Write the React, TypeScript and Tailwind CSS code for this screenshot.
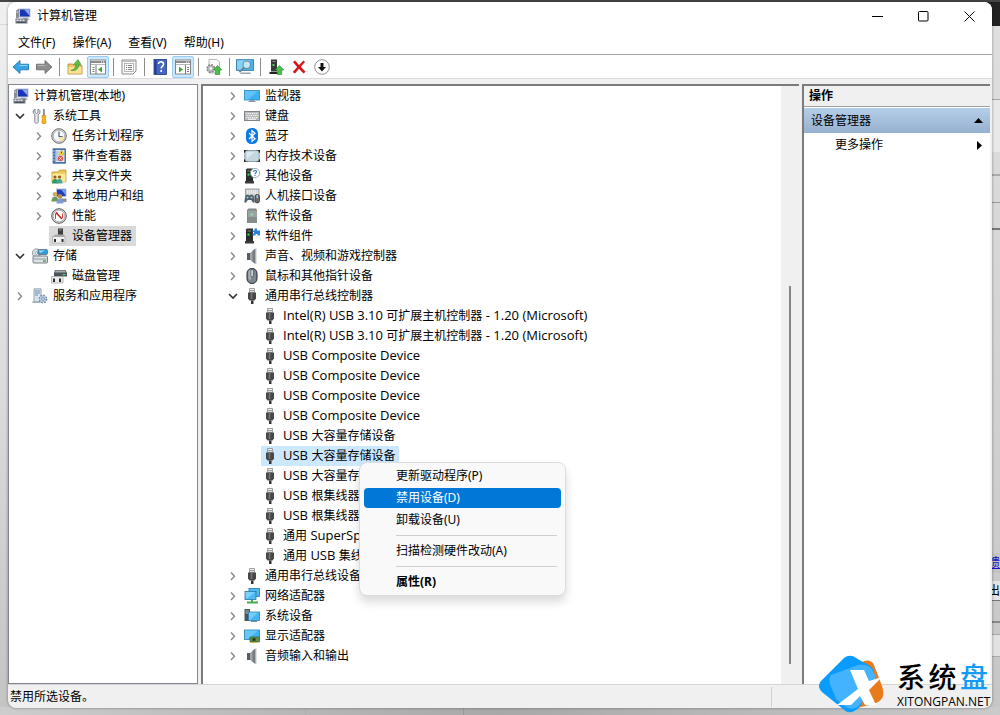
import { Fragment, type ReactNode } from "react";
import { clsx } from "clsx";

/* ---------- icons ---------- */

function Svg({ children, size = 16 }: { children: ReactNode; size?: number }) {
  return (
    <svg width={size} height={size} viewBox="0 0 16 16" className="shrink-0" aria-hidden="true">
      {children}
    </svg>
  );
}

const ComputerIcon = () => (
  <Svg>
    <path d="M1 2.500l3-2v9l-3 1z" fill="#8a8f96" />
    <path d="M1.500 3.500h1.500v1H1.500z" fill="#e8ecef" />
    <rect x="4" y="0.500" width="11.500" height="9" fill="#b9c3cf" />
    <rect x="5" y="1.500" width="9.500" height="7" fill="#1b35b5" />
    <path d="M9 1.500h5.500v6z" fill="#8fabf0" />
    <path d="M8 9.500h5l2 2.500H8z" fill="#b4bcc4" />
    <path d="M0.500 10.500h12v5h-12z" fill="#737b83" />
    <path d="M1.500 11.500h2v1.500h-2zM4.500 11.500h2v1.500h-2zM7.500 11.500h2v1.500h-2z" fill="#e3e8ec" />
    <path d="M2 14h9v1H2z" fill="#4a5056" />
  </Svg>
);

const ToolsIcon = () => (
  <Svg>
    <path d="M3 1v3.500L4.500 5.500 6 4.500V1c1.600.8 2.300 2.200 1.800 3.800-.2.800-.9 1.400-1.600 1.800v7.200c0 2-3.400 2-3.400 0V6.600C1.800 6 1.200 5.200 1.200 4 1.200 2.600 2 1.500 3 1z" fill="#e9edf0" stroke="#6f7880" strokeWidth="0.900" />
    <path d="M11 1h1.800v6.500H11z" fill="#848c93" />
    <path d="M10 7.500h3.800v2l-.6.600.8 4.200c0 2-4.200 2-4.200 0l.8-4.200-.6-.6z" fill="#f8b41c" stroke="#bd7c05" strokeWidth="0.600" />
  </Svg>
);

const ClockIcon = () => (
  <Svg>
    <circle cx="8" cy="8" r="7.300" fill="#d6d6d6" stroke="#6d6d6d" />
    <circle cx="8" cy="8" r="5.700" fill="#f6fafd" stroke="#a5a5a5" strokeWidth="0.700" />
    <path d="M8 13.500A5.500 5.500 0 0 0 13.300 8.500L8 8z" fill="#f4e6a6" />
    <path d="M8 3.500V8.500h3.500" stroke="#4d617a" fill="none" strokeWidth="1.200" />
  </Svg>
);

const EventIcon = () => (
  <Svg>
    <rect x="2" y="0.800" width="12.500" height="14.400" fill="#4a78b8" stroke="#2f568c" strokeWidth="0.700" />
    <rect x="4.500" y="2" width="9" height="12" fill="#dbe8f6" />
    <path d="M5 4h3M5 6h2M5 8h2M5 10h2M5 12h2" stroke="#7c9cc4" strokeWidth="0.800" />
    <path d="M10.500 2l3 5h-6z" fill="#ffdf43" stroke="#b58f00" strokeWidth="0.500" />
    <path d="M10.500 3.800v1.700" stroke="#5d4a00" />
    <circle cx="9.500" cy="10.500" r="2.700" fill="#e0574b" />
    <path d="M8.500 9.500l2 2m0-2l-2 2" stroke="#fff" />
    <path d="M1 3h2.500M1 6h2.500M1 9h2.500M1 12h2.500" stroke="#c9d6e6" />
  </Svg>
);

const SharedFolderIcon = () => (
  <Svg>
    <path d="M1 4h6l1.500-2H15v12H1z" fill="#ecc757" stroke="#b8902c" strokeWidth="0.700" />
    <path d="M1.500 5.500h13v8.500h-13z" fill="#fae898" />
    <circle cx="4" cy="9" r="1.600" fill="#8c5c2e" />
    <path d="M1 15.500c0-3.500 1.500-4.500 3-4.500s3 1 3 4.500z" fill="#2e9a55" />
    <circle cx="8.500" cy="9" r="1.600" fill="#8c5c2e" />
    <path d="M5.500 15.500c0-3.500 1.500-4.500 3-4.500s3 1 3 4.500z" fill="#4ba1a0" />
  </Svg>
);

const UsersIcon = () => (
  <Svg>
    <rect x="5" y="0.500" width="10.500" height="8.500" fill="#b9c3cf" />
    <rect x="6" y="1.500" width="8.500" height="6.500" fill="#1c3fbe" />
    <path d="M10 1.500h4.500v5.500z" fill="#7ea0ee" />
    <path d="M9 10.500h6.500v3.500H9z" fill="#8a9097" />
    <circle cx="4" cy="6.300" r="2.400" fill="#d2a865" />
    <path d="M0.500 13.500c0-3.500 1.500-4.700 3.500-4.700s3.500 1.200 3.500 4.700z" fill="#6c9a58" />
    <circle cx="9" cy="8.300" r="2.400" fill="#b98a4e" />
    <path d="M5.500 15.500c0-3.500 1.500-5 3.500-5s3.500 1.500 3.500 5z" fill="#7f9cd2" />
  </Svg>
);

const PerformanceIcon = () => (
  <Svg>
    <circle cx="8" cy="8" r="7.300" fill="#d9d9d9" stroke="#5d5d5d" />
    <circle cx="8" cy="8" r="5.800" fill="#fff" stroke="#8b8b8b" strokeWidth="0.600" />
    <path d="M4.500 11V6l2-1.500M11.500 10V5.500" stroke="#d4453d" strokeWidth="1.100" fill="none" />
    <path d="M5 4.500l6 6.500" stroke="#b9201a" strokeWidth="1.500" />
  </Svg>
);

const DeviceManagerIcon = () => (
  <Svg>
    <path d="M7 0.500h5v7H7z" fill="#3d3d3d" />
    <path d="M8 1.500h3v1H8z" fill="#8c8c8c" />
    <path d="M1.500 8.500h12.500v6.500H1.500z" fill="#f1f1f1" stroke="#a8a8a8" strokeWidth="0.700" />
    <path d="M4 6.500h9l1 2.500H2z" fill="#a9a9a9" />
    <path d="M3 11h2v3H3zM10.500 11h2v3h-2z" fill="#2c2c2c" />
  </Svg>
);

const StorageIcon = () => (
  <Svg>
    <circle cx="4.500" cy="5" r="4.200" fill="#d8dde2" stroke="#828a92" strokeWidth="0.800" />
    <circle cx="4.500" cy="5" r="1.200" fill="#fff" stroke="#828a92" strokeWidth="0.600" />
    <rect x="6" y="1.500" width="9.500" height="5" rx="1" fill="#2f9ddb" stroke="#5b6770" strokeWidth="0.700" />
    <path d="M7 2.500h6L8 5z" fill="#a5dcf8" />
    <rect x="1" y="8" width="14.500" height="7" rx="1" fill="#dde2e6" stroke="#6c757d" strokeWidth="0.900" />
    <path d="M2 11h12.500" stroke="#929ba3" />
    <rect x="11" y="12.300" width="3" height="1.400" fill="#35a843" />
  </Svg>
);

const DiskIcon = () => (
  <Svg>
    <path d="M4 2h10.500L16 5v3.500H3V5z" fill="#4b5257" />
    <path d="M4.500 2.500h9.500l1 2H4z" fill="#a4acb1" />
    <rect x="11.500" y="6" width="3" height="1.200" fill="#54d069" />
    <path d="M0.500 8.500h11.500v6.500H0.500z" fill="#ececec" stroke="#9d9d9d" strokeWidth="0.700" />
    <path d="M2 10.500h2V14H2zM8 10.500h2V14H8z" fill="#2c2c2c" />
  </Svg>
);

const ServicesIcon = () => (
  <Svg>
    <path d="M2 0.800h7v13H2z" fill="#dbe5ee" stroke="#7f95aa" strokeWidth="0.800" />
    <path d="M3 3h5M3 5h5M3 7h3" stroke="#6c8db0" />
    <path d="M0.500 13h8v2h-8z" fill="#a5b4c2" />
    <circle cx="11" cy="11" r="3.600" fill="#c3d4e5" stroke="#6f8eaf" strokeWidth="1.600" strokeDasharray="1.700 1.100" />
    <circle cx="11" cy="11" r="3" fill="#b4cae0" />
    <circle cx="11" cy="11" r="1.300" fill="#fff" stroke="#50749b" strokeWidth="0.700" />
  </Svg>
);

const MonitorIcon = () => (
  <Svg>
    <rect x="0.500" y="2.500" width="15" height="9.500" fill="#3fb1ee" stroke="#2a86bd" strokeWidth="0.800" />
    <path d="M1 3h13L4 11.500H1z" fill="#62c2f5" />
    <path d="M6 12.500h4M4.500 13.500h7" stroke="#8b989f" />
  </Svg>
);

const KeyboardIcon = () => (
  <Svg>
    <rect x="0.500" y="3.500" width="15" height="9" fill="#b9bbbc" stroke="#808385" />
    <path d="M2 5.500h12M3 7.500h11M2 9.500h12" stroke="#f5f5f5" strokeDasharray="1.200 0.800" />
    <path d="M4 11.200h8" stroke="#fff" />
  </Svg>
);

const BluetoothIcon = () => (
  <Svg>
    <rect x="2" y="0" width="12" height="16" rx="5.500" fill="#0a7ae2" />
    <path d="M5 5l6 5.800-3 2.700v-11l3 2.700L5 11" stroke="#fff" strokeWidth="1.200" fill="none" />
  </Svg>
);

const MemoryIcon = () => (
  <Svg>
    <path d="M0 2h4v3H0zM12 2h4v3h-4zM0 11h4v3H0zM12 11h4v3h-4z" fill="#1e1e1e" />
    <rect x="0.800" y="2.500" width="14.400" height="11" rx="2.500" fill="#c4d6e0" stroke="#7b8a93" strokeWidth="0.800" />
    <path d="M2.500 4h8L3 11z" fill="#dce9f0" />
  </Svg>
);

const TowerBody = () => (
  <>
    <path d="M2 1.500l1-1h6v12.500H2z" fill="#2b2f2c" />
    <path d="M1 13h9v2.500H1z" fill="#3a3a3a" />
    <rect x="3.500" y="2.500" width="3.500" height="1" fill="#7f8a82" />
    <rect x="3.500" y="5.500" width="2" height="2.200" fill="#3bd24c" />
  </>
);

const OtherDeviceIcon = () => (
  <Svg>
    <TowerBody />
    <circle cx="11" cy="5" r="4.600" fill="#fff" stroke="#7c99af" strokeWidth="0.800" />
    <path d="M9.500 4c0-2 3-2 3-.2 0 1.200-1.500 1.200-1.500 2.400M11 7v1" stroke="#3576b0" fill="none" strokeWidth="1.100" />
  </Svg>
);

const HidIcon = () => (
  <Svg>
    <rect x="1.500" y="1" width="13.500" height="8" fill="#cfd1d2" stroke="#8b8e90" strokeWidth="0.800" />
    <path d="M3 3h11M3 5h11" stroke="#fff" strokeDasharray="1.200 0.800" />
    <path d="M0.500 14.500c0-5 1-8 3-8 1 0 1.300 1 2 1s1-1 2-1c2 0 3 3 3 8-1.500 1.500-2.500-2-3.500-2.500H4C3 12.500 2 16 .5 14.500z" fill="#49606f" />
    <circle cx="3.500" cy="9.500" r="1" fill="#b6c4cd" />
    <circle cx="7.500" cy="9.500" r="1" fill="#b6c4cd" />
    <rect x="11" y="6.500" width="4.500" height="8.500" rx="2.200" fill="#656c72" stroke="#23272a" strokeWidth="0.700" />
    <path d="M13.200 7v3" stroke="#e1e5e8" />
  </Svg>
);

const SoftwareDeviceIcon = () => (
  <Svg>
    <path d="M3 2l1.500-1.500H12L13 2v13H3z" fill="#7e8686" />
    <path d="M4 2.500h9v12H4z" fill="#9aa2a2" />
    <path d="M4 9h9v6H4z" fill="#858d8d" />
    <rect x="6.500" y="5.500" width="2.500" height="2" fill="#8de0ae" />
  </Svg>
);

const SoftwareComponentIcon = () => (
  <Svg>
    <TowerBody />
    <path d="M8.500 2.500h2V0.500h2.500v2h3V7.500H13.500V6h-2v1.500h-3V5.500H10v-1.500H8.500z" fill="#2d83d8" />
  </Svg>
);

const SpeakerIcon = () => (
  <Svg>
    <path d="M3 5h3v7H3z" fill="#5c5f62" />
    <path d="M6 5L11.500 0.500v15.500L6 12z" fill="#a1a5a8" />
    <path d="M8.500 3L11.500 0.500v15.500l-3-2.200z" fill="#787c80" />
    <path d="M12 0.500V16" stroke="#c2c5c7" />
  </Svg>
);

const MouseIcon = () => (
  <Svg>
    <rect x="3" y="0.500" width="10" height="15" rx="4.800" fill="#7d868e" stroke="#22272b" />
    <path d="M4.500 4c0-1.500 1-2.500 2.500-2.500V12l-2.500-1z" fill="#aab3ba" />
    <rect x="7" y="1.500" width="2.200" height="7.500" rx="1" fill="#f2f5f7" stroke="#22272b" strokeWidth="0.600" />
  </Svg>
);

const UsbIcon = () => (
  <Svg>
    <path d="M5.500 0.500h5v4h-5z" fill="#efefef" stroke="#8a8a8a" strokeWidth="0.800" />
    <path d="M6.500 2h1v1.200h-1zM8.500 2h1v1.200h-1z" fill="#555" />
    <path d="M4 4.500h8v6L10.500 12.500h-5L4 10.500z" fill="#484848" />
    <path d="M7.500 5v6" stroke="#777" strokeWidth="1.600" />
    <path d="M7 12.500h2.500V16H7z" fill="#333" />
  </Svg>
);

const NetworkIcon = () => (
  <Svg>
    <rect x="5" y="0.500" width="10.500" height="8" fill="#4fb9ef" stroke="#2478a9" strokeWidth="0.800" />
    <rect x="1" y="3.500" width="11" height="8" fill="#4dbbf2" stroke="#2478a9" strokeWidth="0.800" />
    <path d="M1.500 4h9.500L2 11z" fill="#7ed2f9" />
    <path d="M8 12v2M3 14.500h11" stroke="#3ead4b" strokeWidth="2" />
  </Svg>
);

const SystemDeviceIcon = () => (
  <Svg>
    <path d="M0.500 1H6v12H0.500z" fill="#49545c" />
    <path d="M1.500 3h3.500M1.500 5h3.500" stroke="#aeb8bf" />
    <rect x="4.500" y="4" width="11" height="8.500" fill="#46b4ee" stroke="#2c7fb0" strokeWidth="0.800" />
    <path d="M5 4.500h9L6 12H5z" fill="#72cbf8" />
    <path d="M7 13.500h6" stroke="#7c8991" />
  </Svg>
);

const DisplayIcon = () => (
  <Svg>
    <rect x="0.500" y="2" width="15" height="9.500" fill="#3fb1ee" stroke="#2a7fb2" strokeWidth="0.800" />
    <path d="M1 2.500h13L4 11H1z" fill="#69c7f7" />
    <path d="M6 9h9.500v5H6z" fill="#5b8f4f" stroke="#2c5e24" strokeWidth="0.600" />
    <path d="M8.500 10.200h3v2.500h-3z" fill="#23301f" />
    <path d="M7 14.500h6" stroke="#dcae35" />
  </Svg>
);

function ArrowIcon({ forward }: { forward?: boolean }) {
  return (
    <Svg>
      <path
        d={forward ? "M16 8L9 1.500v3.700H0.500v5.600H9v3.700z" : "M0 8l7-6.500v3.700h8.500v5.600H7v3.700z"}
        fill={forward ? "#8d8d8d" : "#36a4e6"}
        stroke={forward ? "#666" : "#1c6db0"}
        strokeWidth="0.800"
      />
      <path d={forward ? "M1.500 6.500h8" : "M6.500 6.500h8"} stroke={forward ? "#b5b5b5" : "#8bd2f7"} />
    </Svg>
  );
}

const FolderUpIcon = () => (
  <Svg>
    <path d="M1 5h5l1.500 1.500H15V15H1z" fill="#ecc765" stroke="#b18b35" strokeWidth="0.800" />
    <path d="M1.500 8h13v6.500h-13z" fill="#f8df91" />
    <path d="M4 11.500c3.500-1 5-3 5-6H6.500L11 0.500l3 5h-2.300c0 4.500-3 6.500-7.700 6z" fill="#5dc043" stroke="#2b7d22" strokeWidth="0.500" />
  </Svg>
);

function PaneIcon({ right }: { right?: boolean }) {
  return (
    <Svg>
      <rect x="0.500" y="1" width="15" height="14" fill="#fff" stroke="#858585" />
      <path d="M1 2h14v2H1z" fill="#8c8c8c" />
      <path d="M11 3h3" stroke="#fff" strokeDasharray="1 1" />
      <path d="M1 5.500h14" stroke="#b8b8b8" />
      <path d={right ? "M10.500 6v9M12 8.500h2M12 10.500h2M12 12.500h2" : "M6 6v9M2.500 8.500h2M2.500 10.500h2M2.500 12.500h2"} stroke="#777" />
      <path d={right ? "M4 7.500v6l4-3z" : "M12 7.500v6l-4-3z"} fill="#3fa535" />
    </Svg>
  );
}

const PropertiesIcon = () => (
  <Svg>
    <path d="M1 1h14v11l-3 3H1z" fill="#fafafa" stroke="#8b8b8b" />
    <path d="M1.500 2.500h13" stroke="#bbb" />
    <rect x="3.500" y="4.500" width="9" height="8" fill="#fff" stroke="#a5a5a5" strokeWidth="0.800" />
    <path d="M5 6.500h1M7 6.500h4M5 8.500h1M7 8.500h4M5 10.500h1M7 10.500h4" stroke="#808080" />
  </Svg>
);

const HelpIcon = () => (
  <Svg>
    <rect x="2" y="0.500" width="12.500" height="15" fill="#4665bf" stroke="#22397c" strokeWidth="0.800" />
    <path d="M2.500 1h2v14h-2z" fill="#263f8b" />
    <path d="M6.500 5c0-3 5-3 5 .2 0 2-2.300 2-2.300 4.300M9.200 11v2" stroke="#fff" strokeWidth="1.600" fill="none" />
  </Svg>
);

const UpArrow = ({ x }: { x: number }) => (
  <path transform={`translate(${x} 6.500)`} d="M4 0l4.300 4.500H6.200V9H1.800V4.500H-.3z" fill="#4dbe4b" stroke="#258a2b" strokeWidth="0.600" />
);

const UpdateDriverIcon = () => (
  <Svg>
    <path d="M3 0.500h8L13.500 3v11H3z" fill="#fafafa" stroke="#a3a3a3" strokeWidth="0.800" />
    <circle cx="4.800" cy="9.500" r="3.600" fill="#bcbcbc" stroke="#7d7d7d" strokeWidth="1.700" strokeDasharray="1.700 1.100" />
    <circle cx="4.800" cy="9.500" r="3" fill="#b5b5b5" />
    <circle cx="4.800" cy="9.500" r="1.300" fill="#fff" />
    <UpArrow x={7.500} />
  </Svg>
);

const ScanIcon = () => (
  <Svg size={18}>
    <rect x="0.500" y="1.500" width="15" height="9.500" fill="#4db4ea" stroke="#357ca5" strokeWidth="0.800" />
    <path d="M1 2h12L4 10.500H1z" fill="#84d1f6" />
    <path d="M4 13.500h9" stroke="#99a3a9" strokeWidth="1.400" />
    <circle cx="9.500" cy="6" r="3.300" fill="#c0e8fb" stroke="#688594" strokeWidth="0.900" />
    <path d="M7 8.500L3 12.500" stroke="#688594" strokeWidth="1.600" />
  </Svg>
);

const EnableIcon = () => (
  <Svg>
    <path d="M3 0.500h6v12H3z" fill="#363b38" />
    <path d="M1.500 13h8.500v2H1.500z" fill="#232323" />
    <path d="M4.500 2.500h3" stroke="#858e88" />
    <rect x="4.500" y="5" width="2" height="2" fill="#48cf57" />
    <UpArrow x={7.500} />
  </Svg>
);

const RemoveIcon = () => (
  <Svg>
    <path d="M2 3l2-1.500L8 6l4.500-4.500L14 3 9.800 7.800l4.700 5-2 1.700L8 9.800l-4 4.700-2.200-1.500L6.200 8z" fill="#d6141a" />
  </Svg>
);

const DisableIcon = () => (
  <Svg>
    <circle cx="8" cy="8" r="7.300" fill="#fff" stroke="#777" strokeWidth="0.800" />
    <path d="M6.500 4h3v4H12l-4 4.500L4 8h2.500z" fill="#111" />
  </Svg>
);

function Chevron({ open }: { open?: boolean }) {
  return (
    <svg width="16" height="16" viewBox="0 0 16 16" fill="none" className="shrink-0" aria-hidden="true">
      {open ? (
        <path d="M4 6l4 4 4-4" stroke="#333" strokeWidth="1.600" />
      ) : (
        <path d="M6 4.500L9.500 8.300 6 12" stroke="#8a8a8a" strokeWidth="1.400" />
      )}
    </svg>
  );
}

/* ---------- data ---------- */

type Node = { label: string; icon: () => ReactNode; open?: boolean; leaf?: boolean; selected?: boolean; children?: Node[] };

const consoleTree: Node[] = [
  {
    label: "系统工具",
    icon: ToolsIcon,
    open: true,
    children: [
      { label: "任务计划程序", icon: ClockIcon },
      { label: "事件查看器", icon: EventIcon },
      { label: "共享文件夹", icon: SharedFolderIcon },
      { label: "本地用户和组", icon: UsersIcon },
      { label: "性能", icon: PerformanceIcon },
      { label: "设备管理器", icon: DeviceManagerIcon, leaf: true, selected: true },
    ],
  },
  { label: "存储", icon: StorageIcon, open: true, children: [{ label: "磁盘管理", icon: DiskIcon, leaf: true }] },
  { label: "服务和应用程序", icon: ServicesIcon },
];

const usbDevices = [
  "Intel(R) USB 3.10 可扩展主机控制器 - 1.20 (Microsoft)",
  "Intel(R) USB 3.10 可扩展主机控制器 - 1.20 (Microsoft)",
  "USB Composite Device",
  "USB Composite Device",
  "USB Composite Device",
  "USB Composite Device",
  "USB 大容量存储设备",
  "USB 大容量存储设备",
  "USB 大容量存储设备",
  "USB 根集线器",
  "USB 根集线器",
  "通用 SuperSpeed",
  "通用 USB 集线器",
];

const deviceTree: Node[] = [
  { label: "监视器", icon: MonitorIcon },
  { label: "键盘", icon: KeyboardIcon },
  { label: "蓝牙", icon: BluetoothIcon },
  { label: "内存技术设备", icon: MemoryIcon },
  { label: "其他设备", icon: OtherDeviceIcon },
  { label: "人机接口设备", icon: HidIcon },
  { label: "软件设备", icon: SoftwareDeviceIcon },
  { label: "软件组件", icon: SoftwareComponentIcon },
  { label: "声音、视频和游戏控制器", icon: SpeakerIcon },
  { label: "鼠标和其他指针设备", icon: MouseIcon },
  {
    label: "通用串行总线控制器",
    icon: UsbIcon,
    open: true,
    children: usbDevices.map((label, i) => ({ label, icon: UsbIcon, leaf: true, selected: i === 7 })),
  },
  { label: "通用串行总线设备", icon: UsbIcon },
  { label: "网络适配器", icon: NetworkIcon },
  { label: "系统设备", icon: SystemDeviceIcon },
  { label: "显示适配器", icon: DisplayIcon },
  { label: "音频输入和输出", icon: SpeakerIcon },
];

const menuItems = [
  { label: "更新驱动程序(P)" },
  { label: "禁用设备(D)", active: true },
  { label: "卸载设备(U)" },
  null,
  { label: "扫描检测硬件改动(A)" },
  null,
  { label: "属性(R)", bold: true },
];

const toolbar: ({ label: string; icon: ReactNode; on?: boolean } | null)[] = [
  { label: "后退", icon: <ArrowIcon /> },
  { label: "前进", icon: <ArrowIcon forward /> },
  null,
  { label: "上一级", icon: <FolderUpIcon /> },
  { label: "显示/隐藏控制台树", icon: <PaneIcon />, on: true },
  null,
  { label: "属性", icon: <PropertiesIcon /> },
  null,
  { label: "帮助", icon: <HelpIcon /> },
  { label: "显示/隐藏操作窗格", icon: <PaneIcon right />, on: true },
  null,
  { label: "更新驱动程序", icon: <UpdateDriverIcon /> },
  null,
  { label: "扫描检测硬件改动", icon: <ScanIcon /> },
  null,
  { label: "启用设备", icon: <EnableIcon /> },
  { label: "卸载设备", icon: <RemoveIcon /> },
  { label: "禁用设备", icon: <DisableIcon /> },
];

/* ---------- parts ---------- */

function ContextMenu() {
  return (
    <div
      role="menu"
      className="absolute left-[98px] top-4 z-10 flex w-[207px] flex-col gap-0.5 rounded-lg border border-[#dcdcdc] bg-[#f9f9f9] px-1 py-[3px] shadow-[0_6px_10px_rgba(0,0,0,0.15)]"
    >
      {menuItems.map((item, i) =>
        item ? (
          <button
            key={i}
            role="menuitem"
            className={clsx(
              "h-5 rounded-[4px] pl-8 text-left leading-5 whitespace-nowrap",
              item.active && "bg-[#0078d7] text-white",
              item.bold && "font-bold"
            )}
          >
            {item.label}
          </button>
        ) : (
          <hr key={i} className="my-[3px] mr-1 ml-8 border-[#cfcfcf]" />
        )
      )}
    </div>
  );
}

function ConsoleItem({ node, nested }: { node: Node; nested?: boolean }) {
  const Icon = node.icon;
  return (
    <li>
      <div className={clsx("flex h-5 items-center gap-0.5", nested ? "pl-[22px]" : "pl-[3px]")}>
        <span className="flex w-4">{!node.leaf && <Chevron open={node.open} />}</span>
        <button
          className={clsx(
            "flex h-5 items-center gap-[5px] pr-1 pl-0.5 whitespace-nowrap",
            node.selected && "bg-[#d9d9d9]"
          )}
        >
          <Icon />
          {node.label}
        </button>
      </div>
      {node.children && (
        <ul>
          {node.children.map((child) => (
            <ConsoleItem key={child.label} node={child} nested />
          ))}
        </ul>
      )}
    </li>
  );
}

// Latin runs are set one step larger than the Chinese ones
function DeviceLabel({ text }: { text: string }) {
  return (
    <span className="h-5 whitespace-pre">
      {text.split(/([\x20-\x7e]+)/).map((run, i) =>
        i % 2 ? (
          <span key={i} className="font-['Open_Sans',sans-serif] text-[13px] leading-none">
            {run}
          </span>
        ) : (
          <Fragment key={i}>{run}</Fragment>
        )
      )}
    </span>
  );
}

function DeviceItem({ node }: { node: Node }) {
  const Icon = node.icon;
  return (
    <li>
      <div className={clsx("flex h-5 items-center gap-0.5", node.leaf ? "pl-[58px]" : "pl-[22px]")}>
        {!node.leaf && <Chevron open={node.open} />}
        <div className="relative">
          <button
            className={clsx(
              "flex h-5 items-center gap-[5px] px-px leading-5",
              node.selected && "bg-[#cce8ff] pr-1"
            )}
          >
            <Icon />
            <DeviceLabel text={node.label} />
          </button>
          {node.leaf && node.selected && <ContextMenu />}
        </div>
      </div>
      {node.children && (
        <ul>
          {node.children.map((child, i) => (
            <DeviceItem key={i} node={child} />
          ))}
        </ul>
      )}
    </li>
  );
}

function TitleBar() {
  return (
    <header className="flex h-7 shrink-0 items-center bg-white pl-[7px]">
      <ComputerIcon />
      <h1 className="ml-1.5 flex-1">计算机管理</h1>
      <button aria-label="最小化" className="flex h-7 w-[46px] items-center justify-center">
        <svg width="11" height="11" stroke="#000" fill="none">
          <path d="M0 5.500h11" />
        </svg>
      </button>
      <button aria-label="最大化" className="flex h-7 w-[46px] items-center justify-center">
        <svg width="11" height="11" stroke="#000" fill="none">
          <rect x="0.500" y="0.500" width="9.500" height="9.500" rx="1" />
        </svg>
      </button>
      <button aria-label="关闭" className="flex h-7 w-[46px] items-center justify-center">
        <svg width="11" height="11" stroke="#000" fill="none">
          <path d="M0.500 0.500l10 10M10.500 0.500l-10 10" />
        </svg>
      </button>
    </header>
  );
}

function ActionsPane() {
  return (
    <aside className="flex w-[188px] shrink-0 flex-col border-t-2 border-l-2 border-[#7b7b7b] bg-white">
      <h2 className="h-[21px] border-b border-[#a0a0a0] bg-[#f0f0f0] pl-[5px] leading-5 font-bold">操作</h2>
      <button className="mt-px flex h-[25px] items-center justify-between bg-linear-to-b from-[#b5cee8] to-[#96b1d0] px-[7px]">
        设备管理器
        <svg width="9" height="5">
          <path d="M0 5L4.500 0 9 5z" />
        </svg>
      </button>
      <button className="flex h-6 items-center justify-between pr-2 pl-[31px]">
        更多操作
        <svg width="5" height="9">
          <path d="M0 0l5 4.500L0 9z" />
        </svg>
      </button>
    </aside>
  );
}

// Strips of the desktop and of other windows that show round the edges
function Backdrop() {
  return (
    <div className="absolute inset-0 flex flex-col overflow-hidden bg-[#b8b8b8]">
      <div className="h-0.5 shrink-0 bg-[#454545]" />
      <div className="flex flex-1 justify-between">
        <div className="w-5 bg-linear-to-b from-[#f0f0f0] via-[#dedede] to-[#c4c4c4]">
          <div className="h-[23px] border-b border-[#d8d8d8]" />
        </div>
        <div className="flex w-5 flex-col bg-linear-to-b from-[#e0e0e0] to-[#c6c6c6] pl-3">
          <div className="-ml-3 h-6 bg-[#222]" />
          <div className="h-[74px] border-b border-[#a8a8a8]" />
          <div className="h-[52px] bg-[#e8e8e8]" />
          <div className="h-6 border-b-2 border-[#aaa]" />
          <div className="h-[27px] border-b border-[#999]" />
          <div className="h-[27px] border-b-2 border-[#777]" />
          <div className="h-[323px]" />
          <div className="flex h-5 justify-end overflow-hidden bg-[#c4c4c4] leading-5 text-[#1a0dcc] underline">馈</div>
          <div className="h-2" />
          <div className="flex h-5 justify-end overflow-hidden border-b border-[#777] bg-[#e4e4e4] leading-5">出</div>
          <div className="h-[22px] border-b-2 border-[#888]" />
          <div className="h-3 border-b border-[#aaa]" />
          <div className="h-[22px] border-b border-[#aaa] bg-[#e2e2e2]" />
        </div>
      </div>
      <div className="flex h-2 shrink-0 bg-linear-to-r from-[#cdcdcd] via-[#a8a8a8] to-[#cacaca]">
        <div className="w-[306px] border-r border-[#b0b0b0]" />
        <div className="w-[158px] border-r border-[#999]" />
      </div>
    </div>
  );
}

function Watermark() {
  return (
    <div className="absolute right-3 bottom-0.5 z-20 flex items-center gap-3">
      <svg width="66" height="58" viewBox="0 0 66 58" aria-hidden="true">
        <path d="M42 8c5-4 11-3 13 2l8 21c3 9 1 14-6 17l-22 6z" fill="#e87b1c" />
        <path d="M25 3c4-3 8-3 12 0l14 8c3 2 4 4 4 7L42 50c-3 4-6 6-9 7-4 1-7-1-9-3L3 37c-4-4-4-8 0-12z" fill="#0a9bff" />
        <path d="M12 20l27-10c5-1 11 0 14 4l4 8-15 26c-3 6-10 7-15 4l-10-8C14 34 7 26 12 20z" fill="#43b2ff" />
        <path d="M31 15h14l5 11 13-4-13 13 7 15H46l-5-9-9 9H18l21-16z" fill="#fff" />
      </svg>
      <div className="w-[91px] text-black">
        <div className="flex justify-between font-['Noto_Sans_CJK_SC',sans-serif] text-[28px] leading-9 font-medium">
          <span>系</span>
          <span>统</span>
          <span className="text-[#149bf5]">盘</span>
        </div>
        <div className="font-['Open_Sans',sans-serif] text-[12px] leading-4 font-medium">XITONGPAN.NET</div>
      </div>
    </div>
  );
}

export default function App() {
  return (
    <div className="relative flex h-screen min-h-[640px] flex-col px-2 pt-0.5 pb-[7px] font-['Noto_Sans','Noto_Sans_CJK_SC',sans-serif] text-[12px] leading-5 text-black">
      <Backdrop />
      <main className="relative flex min-h-0 flex-1 flex-col overflow-hidden rounded-lg bg-[#f0f0f0] shadow-[0_0_3px_rgba(0,0,0,0.4)]">
        <TitleBar />
        <nav className="flex h-[25px] shrink-0 items-center gap-[17px] border-b border-[#a5a5a5] bg-white pt-0.5 pl-2.5">
          {["文件(F)", "操作(A)", "查看(V)", "帮助(H)"].map((label) => (
            <button key={label}>{label}</button>
          ))}
        </nav>
        <div className="flex h-6 shrink-0 items-center gap-px border-b border-[#dcdcdc] bg-white pt-px pl-0.5">
          {toolbar.map((tool, i) =>
            tool ? (
              <button
                key={i}
                aria-label={tool.label}
                className={clsx(
                  "flex h-[22px] w-[22px] items-center justify-center",
                  tool.on && "rounded-[2px] border border-[#99cdf5] bg-[#cce8ff]"
                )}
              >
                {tool.icon}
              </button>
            ) : (
              <div key={i} className="mx-[3px] h-[18px] w-px bg-[#8c8c8c]" />
            )
          )}
        </div>

        <div className="flex min-h-0 flex-1 gap-[3px] pt-[5px] pr-0.5">
          <nav className="w-[190px] shrink-0 border border-[#828790] bg-white pt-px">
            <button className="flex h-5 items-center gap-[5px] pl-1">
              <ComputerIcon />
              计算机管理(本地)
            </button>
            <ul>
              {consoleTree.map((node) => (
                <ConsoleItem key={node.label} node={node} />
              ))}
            </ul>
          </nav>

          <section className="flex min-w-0 flex-1 border-t-2 border-l-2 border-[#7b7b7b] bg-white">
            <ul className="min-w-0 flex-1">
              {deviceTree.map((node) => (
                <DeviceItem key={node.label} node={node} />
              ))}
            </ul>
            <div className="flex w-[18px] flex-col items-center bg-[#f0f0f0] pt-[200px] pb-5">
              <div className="w-0.5 flex-1 bg-[#858585]" />
            </div>
          </section>

          <ActionsPane />
        </div>

        <footer className="flex h-6 shrink-0 items-center border-t border-[#d4d4d4] pl-0.5">
          <p className="flex-1">禁用所选设备。</p>
          <div className="h-5 w-[221px] border-l border-[#d0d0d0]" />
        </footer>
      </main>
      <Watermark />
    </div>
  );
}
